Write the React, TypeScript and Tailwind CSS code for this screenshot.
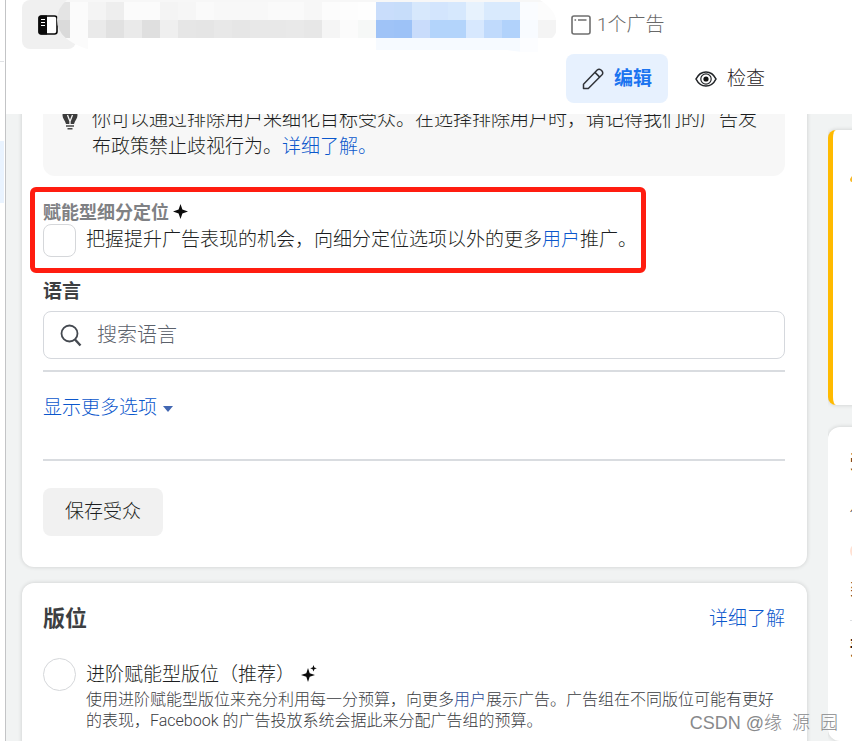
const ROW_TOP = [
  '#e4e4e4', '#fbfbfb', '#f4f4f4', '#eeeeee', '#fbfbfb', '#fbfbfb', '#f4f4f4', '#f6f6f6', '#fafafa', '#f8f8f8',
  '#f8f8f8', '#f8f8f8', '#fafafa', '#fafafa', '#f7f7f7', '#fcfcfc', '#fdfdfd', '#fefefe', '#c9ddfb', '#c7ddfa',
  '#d7e8fc', '#d3e5fd', '#d6e8fd', '#e7f2fd', '#d9eafd', '#d9eafd', '#fafcff', '#fcfcfc',
];
const ROW_MID = [
  '#dadada', '#fbfbfb', '#eaeaea', '#e1e1e1', '#eaeaea', '#dfdfdf', '#efefef', '#e6e6e6', '#e5e5e5', '#e8e8e8',
  '#e6e6e6', '#e8e8e8', '#e8e8e8', '#e9e9e9', '#e7e7e7', '#f5f5f5', '#fbfbfb', '#f6f8f7', '#9fc3f7', '#9dc2f7',
  '#c9dcfb', '#b3d4fb', '#b3d4fb', '#d7e8fe', '#c0dafc', '#b1d2fb', '#f8fbff', '#f4f4f4',
];

/* Pixelated account name */
function Mosaic() {
  return (
    <svg width="505" height="54" viewBox="0 0 505 54" className="relative -ml-6 shrink-0" aria-hidden="true">
      <clipPath id="smear">
        <path d="M15 0H488Q505 10 505 26Q505 34 500 38L486 52H470L455 50H38Q5 40 5 20Q5 8 15 0Z" />
      </clipPath>
      <g clipPath="url(#smear)" shapeRendering="crispEdges">
        <rect x="0" y="0" width="505" height="2" fill="#f7f7f7" />
        {ROW_TOP.map((c, i) => (
          <rect key={`t${i}`} x={i * 18} y="2" width="18" height="18" fill={c} />
        ))}
        {ROW_MID.map((c, i) => (
          <rect key={`m${i}`} x={i * 18} y="20" width="18" height="18" fill={c} />
        ))}
        <rect x="0" y="38" width="36" height="16" fill="#fbfbfb" />
        <rect x="324" y="38" width="144" height="16" fill="#f6faff" />
        <rect x="468" y="38" width="18" height="16" fill="#fcfdff" />
      </g>
    </svg>
  );
}

function PanelIcon() {
  return (
    <svg width="20" height="20" viewBox="0 0 20 20" aria-hidden="true">
      <rect x="1" y="1" width="18" height="18" rx="2.5" fill="#fff" stroke="#0a0a0a" strokeWidth="1.6" />
      <path d="M3 .5h6v19H3A2.5 2.5 0 0 1 .5 17V3A2.5 2.5 0 0 1 3 .5Z" fill="#0a0a0a" />
      <path d="M3 4.5h4M3 7.5h4M3 10.5h4" stroke="#fff" strokeWidth="1.1" />
    </svg>
  );
}

function AdIcon() {
  return (
    <svg width="20" height="20" viewBox="0 0 20 20" fill="none" stroke="#6f6f6f" aria-hidden="true">
      <rect x="1" y="1" width="18" height="18" rx="2" strokeWidth="1.6" />
      <path d="M3.5 5h1.6M7 5h8.5" strokeWidth="1.5" />
    </svg>
  );
}

function PencilIcon() {
  return (
    <svg width="22" height="22" viewBox="0 0 22 22" fill="none" stroke="#303338" strokeWidth="1.5" strokeLinejoin="round" aria-hidden="true">
      <path d="M1.500 20.500V16.200L15.200 2Q17 .6 19 2L20 3Q21.500 5 20 6.800L6.300 20.500Z" />
      <path d="M13 4.400L17.700 9.100" />
    </svg>
  );
}

function EyeIcon() {
  return (
    <svg width="22" height="16" viewBox="0 0 22 16" fill="none" stroke="#222528" strokeWidth="1.6" aria-hidden="true">
      <path d="M1 8Q4.5 1 11 1T21 8Q17.500 15 11 15T1 8Z" />
      <circle cx="11" cy="8" r="5.2" strokeWidth="1.200" />
      <circle cx="11" cy="8" r="2.600" fill="#111" stroke="none" />
    </svg>
  );
}

function BulbIcon() {
  return (
    <svg width="16" height="22" viewBox="0 0 16 22" className="mt-0.5 shrink-0" aria-hidden="true">
      <path d="M8 0C3.500 0 .5 3.200.5 7.300C.5 10.500 3 12.500 4 16H12C13 12.500 15.500 10.500 15.500 7.300C15.500 3.200 12.500 0 8 0Z" fill="#3c3c3c" />
      <path d="M5.500 7L8 13.500L10.500 7M8 13V16" stroke="#f7f7f7" strokeWidth="1.300" fill="none" />
      <path d="M4 18H12M5.500 20.700H10.500" stroke="#4a4a4a" strokeWidth="1.500" />
    </svg>
  );
}

function Sparkle() {
  return (
    <svg width="15" height="15" viewBox="0 0 15 15" className="-mt-1" aria-hidden="true">
      <path d="M7.500 0L9.400 5.600L15 7.500L9.400 9.400L7.500 15L5.600 9.400L0 7.500L5.600 5.600Z" fill="#0c0c0c" />
    </svg>
  );
}

function DoubleSparkle() {
  return (
    <svg width="16" height="17" viewBox="0 0 16 17" className="-mt-1" aria-hidden="true">
      <path d="M7 3L8.700 8.300L14 10L8.700 11.700L7 17L5.300 11.700L0 10L5.300 8.300Z" fill="#0c0c0c" />
      <path d="M12.500 0L13.400 2.400L15.800 3.300L13.400 4.200L12.500 6.600L11.600 4.200L9.200 3.300L11.600 2.400Z" fill="#0c0c0c" />
    </svg>
  );
}

function SearchIcon() {
  return (
    <svg width="22" height="23" viewBox="0 0 22 23" fill="none" stroke="#444950" aria-hidden="true">
      <circle cx="9.500" cy="9.500" r="8" strokeWidth="1.800" />
      <path d="M15 15.500L20.500 21.500" strokeWidth="2.400" />
    </svg>
  );
}

function Header() {
  return (
    <header className="h-[114px] shrink-0 bg-white pl-4">
      <div className="flex h-[54px] items-start">
        <button type="button" aria-label="面板" className="flex h-[49px] w-[54px] shrink-0 items-center rounded-lg bg-[#f0f0f0] pl-4">
          <PanelIcon />
        </button>
        <Mosaic />
        <div className="ml-3.5 flex h-[49px] items-center gap-1.5 whitespace-nowrap text-[19px] text-[#686868]">
          <AdIcon />
          <span className="pt-0.5">1个广告</span>
        </div>
      </div>
      <nav className="flex justify-end pr-[71px]">
        <button type="button" className="flex h-[49px] items-center gap-2.5 rounded-lg bg-[#e7f1fe] px-4 font-bold text-[#1b74f0]">
          <PencilIcon />
          <span className="pt-0.5">编辑</span>
        </button>
        <button type="button" className="flex h-[49px] items-center gap-2.5 px-4 pl-[27px] text-[#1f2225]">
          <EyeIcon />
          <span className="pt-0.5">检查</span>
        </button>
      </nav>
    </header>
  );
}

function AudienceCard() {
  return (
    <section className="-mt-6 rounded-xl bg-white pb-[31px] pl-[21px] pr-[22px] shadow-[0_0_4px_rgba(0,0,0,0.16)]">
      <div className="flex gap-3.5 rounded-xl bg-[#f7f7f7] py-4 pl-[19px] pr-6">
        <BulbIcon />
        <p className="leading-[27px]">
          你可以通过排除用户来细化目标受众。在选择排除用户时，请记得我们的广告发布政策禁止歧视行为。
          <a href="#exclusions" className="text-[#0b57cc]">详细了解。</a>
        </p>
      </div>

      {/* Highlighted option */}
      <div className="-ml-[13px] mt-[11px] w-[616px] max-w-full rounded-md border-[5px] border-[#ff1d10] px-2 pb-[11px] pt-2.5">
        <h3 className="flex items-center gap-1 text-[18px] font-bold leading-[22px] text-[#7f8184]">
          赋能型细分定位
          <Sparkle />
        </h3>
        <div className="flex items-center gap-2.5">
          <input id="expand" type="checkbox" className="size-[33px] shrink-0 appearance-none rounded-lg border border-[#d5d7da] bg-white" />
          <label htmlFor="expand" className="whitespace-nowrap">
            把握提升广告表现的机会，向细分定位选项以外的更多<a href="#users" className="text-[#0b57cc]">用户</a>推广。
          </label>
        </div>
      </div>

      <label htmlFor="language" className="mt-[5px] block font-bold leading-7 text-[#3d3f42]">语言</label>
      <div className="mt-[5px] flex h-12 items-center gap-[15px] rounded-lg border border-[#d5d8dd] px-4">
        <SearchIcon />
        <input id="language" type="text" placeholder="搜索语言" className="min-w-0 flex-1 text-[20px] outline-none placeholder:text-[#5b616b]" />
      </div>

      <hr className="mt-[11px] border-t-2 border-[#d9dce0]" />
      <button type="button" className="mt-[22px] flex items-center gap-1.5 leading-7 text-[#0b57cc]">
        显示更多选项
        <svg width="10" height="6" viewBox="0 0 10 6" className="mt-0.5" aria-hidden="true">
          <path d="M0 0H10L5 6Z" fill="#4267b2" />
        </svg>
      </button>
      <hr className="mt-[37px] border-t-2 border-[#d9dce0]" />
      <button type="button" className="mt-[27px] h-12 rounded-lg bg-[#f1f1f1] px-[22px]">保存受众</button>
    </section>
  );
}

function PlacementCard() {
  return (
    <section className="mt-4 rounded-xl bg-white pb-10 pl-[21px] pr-[22px] pt-5 shadow-[0_0_4px_rgba(0,0,0,0.16)]">
      <div className="flex items-center justify-between">
        <h2 className="text-[22px] font-bold leading-8 text-[#3d3f42]">版位</h2>
        <a href="#placements" className="text-[#0b57cc]">详细了解</a>
      </div>
      <div className="mt-[23px] flex items-start gap-2.5">
        <input id="advantage" type="radio" name="placement" className="size-[33px] shrink-0 appearance-none rounded-full border border-[#d5d7da] bg-white" />
        <div className="min-w-0 flex-1 pt-[3px]">
          <label htmlFor="advantage" className="flex items-center gap-1.5 leading-7">
            进阶赋能型版位（推荐）
            <DoubleSparkle />
          </label>
          <p className="text-[16px] leading-[21px] text-[#3a3c3f]">
            使用进阶赋能型版位来充分利用每一分预算，向更多<a href="#users" className="text-[#1f4796]">用户</a>展示广告。广告组在不同版位可能有更好的表现，Facebook 的广告投放系统会据此来分配广告组的预算。
          </p>
        </div>
      </div>
    </section>
  );
}

/* Right rail, mostly past the window edge */
function Rail() {
  return (
    <aside className="flex w-6 shrink-0 flex-col overflow-hidden whitespace-nowrap pt-4">
      <div className="h-[275px] w-80 shrink-0 rounded-lg border-l-[5px] border-[#ffba00] bg-white pl-[17px] pt-10 shadow-[0_0_4px_rgba(0,0,0,0.16)]">
        <svg width="22" height="20" viewBox="0 0 22 20" aria-hidden="true">
          <path d="M11 0L22 18Q22 20 20 20H2Q0 20 0 17Z" fill="#f7b928" transform="translate(0 -8)" />
        </svg>
      </div>
      <div className="mt-[22px] w-80 flex-1 rounded-xl bg-white pl-[22px] pt-5 shadow-[0_0_4px_rgba(0,0,0,0.16)]">
        <div className="h-14 font-bold leading-8">受众定义</div>
        <div className="h-10 text-[16px] leading-5">你的受众</div>
        <div className="size-4 rounded-full bg-[#ffe1d3]" />
        <div className="mt-3.5 h-12 border-b border-[#dddfe2] font-normal leading-8">类型</div>
        <div className="mt-3 font-bold leading-8">预估</div>
      </div>
    </aside>
  );
}

export default function App() {
  return (
    <div className="relative flex h-screen overflow-hidden bg-white font-['Roboto','Noto_Sans_CJK_SC',sans-serif] text-[19px] font-light text-[#1c1e21]">
      <div className="flex w-1 shrink-0 flex-col">
        <div className="h-[61px] shrink-0" />
        <div className="h-px shrink-0 bg-[#e0e2e5]" />
        <div className="mt-[79px] h-[62px] shrink-0 bg-[#e9f3ff]" />
      </div>
      <div className="ml-px flex min-w-0 flex-1 flex-col border-l border-[#c3c4c6]">
        <Header />
        <div className="flex min-h-0 flex-1 gap-[21px] overflow-hidden bg-[#f1f3f3] pl-4">
          <main className="min-w-0 flex-1">
            <AudienceCard />
            <PlacementCard />
          </main>
          <Rail />
        </div>
      </div>
      <div className="pointer-events-none absolute bottom-1 right-3.5 whitespace-pre font-['Liberation_Sans','Noto_Sans_CJK_SC',sans-serif] text-[18px] text-[#88898b]">
        CSDN @缘  源  园
      </div>
    </div>
  );
}
